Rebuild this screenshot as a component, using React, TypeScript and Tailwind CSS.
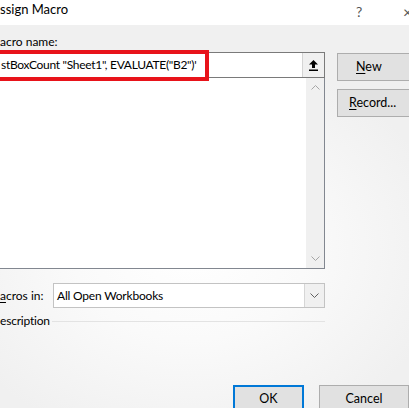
const ChevronUp = ({ className }: { className?: string }) => (
  <svg width="9" height="5" viewBox="0 0 9 5" className={className}>
    <path d="M0.5 4.5 L4.5 0.5 L8.5 4.5" fill="none" stroke="currentColor" strokeWidth="1" />
  </svg>
);

const ChevronDown = ({ className }: { className?: string }) => (
  <svg width="9" height="5" viewBox="0 0 9 5" className={className}>
    <path d="M0.5 0.5 L4.5 4.5 L8.5 0.5" fill="none" stroke="currentColor" strokeWidth="1" />
  </svg>
);

const CollapseArrow = () => (
  <svg width="9" height="11" viewBox="0 0 9 11">
    <path d="M4.5 0 L9 4.5 L6 4.5 L6 8 L3 8 L3 4.5 L0 4.5 Z" fill="#000" />
    <rect x="0" y="9.5" width="9" height="1.5" fill="#000" />
  </svg>
);

const App = () => {
  return (
    <div className="w-[409px] h-[408px] overflow-hidden relative bg-[#f0f0f0] bg-[radial-gradient(ellipse_260px_200px_at_190px_250px,#ffffff_0%,#fafafa_45%,#f0f0f0_100%)] font-[Lato,sans-serif] text-black">
      {/* title bar */}
      <div className="h-[25px] bg-white flex items-center relative">
        <span className="text-[13px] leading-none -mt-[6px]">ssign Macro</span>
        <span className="absolute left-[356px] top-[1px] text-[14px] text-[#555]">?</span>
        <span className="absolute left-[403px] top-[0px] text-[16px] text-[#555]">×</span>
      </div>

      <div className="flex flex-col">
        <div className="text-[12px] leading-none mt-[11px] h-[15px]">acro name:</div>

        <div className="flex gap-[12px]">
          <div className="w-[325px] shrink-0 flex flex-col">
            {/* macro name input */}
            <div className="relative h-[26px] mt-[1px] bg-white border border-[#7a7a7a] border-l-0 flex items-center">
              <span className="text-[12px] tracking-[-0.3px] leading-none pl-[1px] whitespace-nowrap">
                stBoxCount "Sheet1", EVALUATE("B2")'
              </span>
              <div className="absolute right-0 top-0 w-[22px] h-full bg-[#f0f0f0] border-l border-[#d4d4d4] flex items-center justify-center">
                <CollapseArrow />
              </div>
              {/* red highlight */}
              <div className="absolute left-[-10px] top-[-3px] w-[219px] h-[31px] border-[4px] border-[#e8131a]" />
            </div>

            {/* macro list */}
            <div className="h-[191px] bg-white border border-[#828790] border-t-0 border-l-0 flex justify-end">
              <div className="w-[18px] h-full bg-[#f0f0f0] flex flex-col items-center justify-between py-[7px] text-[#a6a6a6]">
                <ChevronUp />
                <ChevronDown />
              </div>
            </div>
          </div>

          <div className="flex flex-col gap-[8px] pt-[2px]">
            <button className="w-[90px] h-[28px] bg-[#e1e1e1] border border-[#adadad] text-[12.5px] leading-none text-left pl-[18px]">
              <span className="underline underline-offset-2">N</span>ew
            </button>
            <button className="w-[90px] h-[28px] bg-[#e1e1e1] border border-[#adadad] text-[12.5px] leading-none text-left pl-[11px]">
              <span className="underline underline-offset-2">R</span>ecord...
            </button>
          </div>
        </div>

        {/* macros in */}
        <div className="flex items-center mt-[14px] w-[325px]">
          <div className="w-[53px] text-[12px] leading-none">
            <span className="underline underline-offset-2">a</span>cros in:
          </div>
          <div className="flex-1 h-[25px] bg-white border border-[#c3c3c3] flex items-center">
            <span className="flex-1 pl-[3px] text-[12px] tracking-[-0.2px] leading-none">All Open Workbooks</span>
            <div className="w-[20px] h-full bg-[#f0f0f0] border-l border-[#d6d6d6] flex items-center justify-center text-[#606060]">
              <ChevronDown />
            </div>
          </div>
        </div>

        {/* description */}
        <div className="flex items-center mt-[4px] w-[325px] h-[18px]">
          <span className="text-[12px] tracking-[-0.2px] leading-none w-[52px]">escription</span>
          <div className="flex-1 h-px bg-[#e3e3e3]" />
        </div>

        {/* footer buttons */}
        <div className="flex gap-[15px] mt-[55px] pl-[233px]">
          <button className="w-[89px] h-[28px] bg-[#e1e1e1] border-2 border-[#0078d7] text-[12.5px] leading-none">
            OK
          </button>
          <button className="w-[90px] h-[28px] shrink-0 bg-[#e1e1e1] border border-[#adadad] text-[12.5px] leading-none">
            Cancel
          </button>
        </div>
      </div>
    </div>
  );
};

export default App;
